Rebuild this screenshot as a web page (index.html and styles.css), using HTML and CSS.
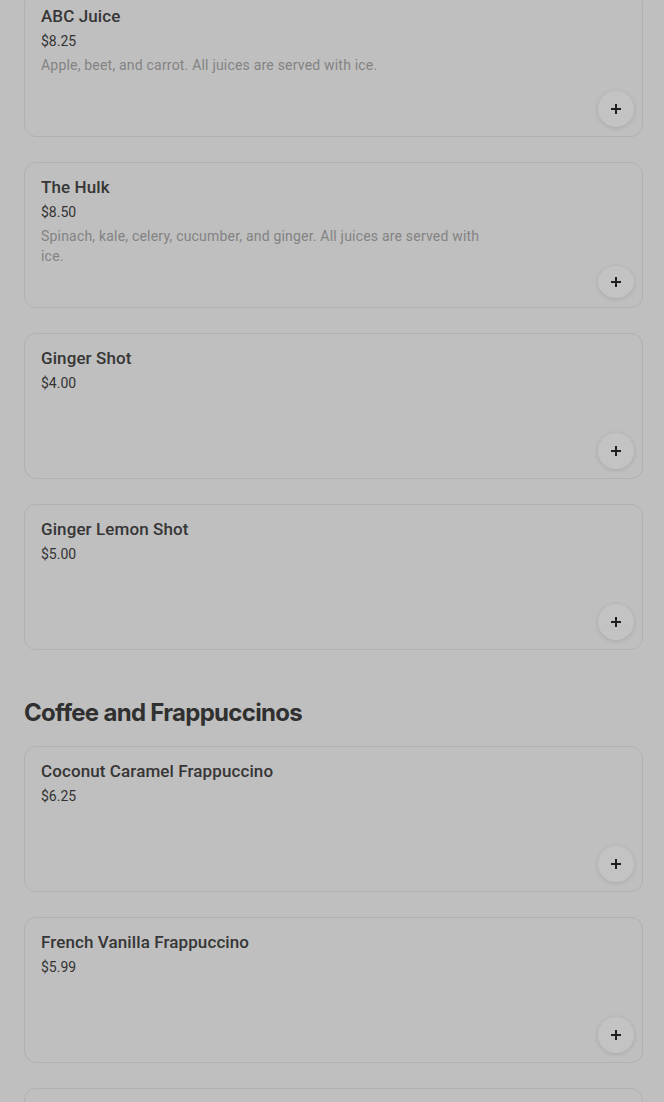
FILE: index.html
```html
<!DOCTYPE html>
<html lang="en">
<head>
    <meta charset="UTF-8">
    <meta name="viewport" content="width=device-width, initial-scale=1.0">
    <title>Menu</title>
    <link rel="stylesheet" href="styles.css">
</head>
<body>
    <div class="menu">
        <section class="group">
            <div class="item">
                <div class="info">
                    <h3 class="name">ABC Juice</h3>
                    <div class="price">$8.25</div>
                    <p class="desc">Apple, beet, and carrot. All juices are served with ice.</p>
                </div>
                <button class="add"><svg viewBox="0 0 12 12" width="12" height="12"><path d="M6 1v10M1 6h10" stroke="#1f1f1f" stroke-width="2"/></svg></button>
            </div>
            <div class="item">
                <div class="info">
                    <h3 class="name">The Hulk</h3>
                    <div class="price">$8.50</div>
                    <p class="desc">Spinach, kale, celery, cucumber, and ginger. All juices are served with ice.</p>
                </div>
                <button class="add"><svg viewBox="0 0 12 12" width="12" height="12"><path d="M6 1v10M1 6h10" stroke="#1f1f1f" stroke-width="2"/></svg></button>
            </div>
            <div class="item">
                <div class="info">
                    <h3 class="name">Ginger Shot</h3>
                    <div class="price">$4.00</div>
                </div>
                <button class="add"><svg viewBox="0 0 12 12" width="12" height="12"><path d="M6 1v10M1 6h10" stroke="#1f1f1f" stroke-width="2"/></svg></button>
            </div>
            <div class="item">
                <div class="info">
                    <h3 class="name">Ginger Lemon Shot</h3>
                    <div class="price">$5.00</div>
                </div>
                <button class="add"><svg viewBox="0 0 12 12" width="12" height="12"><path d="M6 1v10M1 6h10" stroke="#1f1f1f" stroke-width="2"/></svg></button>
            </div>
        </section>

        <section class="group">
            <h2 class="group-title">Coffee and Frappuccinos</h2>
            <div class="item">
                <div class="info">
                    <h3 class="name">Coconut Caramel Frappuccino</h3>
                    <div class="price">$6.25</div>
                </div>
                <button class="add"><svg viewBox="0 0 12 12" width="12" height="12"><path d="M6 1v10M1 6h10" stroke="#1f1f1f" stroke-width="2"/></svg></button>
            </div>
            <div class="item">
                <div class="info">
                    <h3 class="name">French Vanilla Frappuccino</h3>
                    <div class="price">$5.99</div>
                </div>
                <button class="add"><svg viewBox="0 0 12 12" width="12" height="12"><path d="M6 1v10M1 6h10" stroke="#1f1f1f" stroke-width="2"/></svg></button>
            </div>
            <div class="item item-empty"></div>
        </section>
    </div>
</body>
</html>
```

FILE: styles.css
```css
body {
    margin: 0;
    background: #bfbfbf;
    font-family: Roboto, "Liberation Sans", sans-serif;
    color: #2e2e2e;
    overflow: hidden;
}
.menu {
    padding: 0 21px 0 24px;
    margin-top: -9px;
}
.group {
    display: flex;
    flex-direction: column;
    gap: 25px;
}
.group + .group {
    margin-top: 47px;
}
.group-title {
    margin: 0 0 -8px;
    font-family: Inter, "Noto Sans", sans-serif;
    font-size: 24px;
    font-weight: 700;
    letter-spacing: -0.7px;
    line-height: 32px;
    color: #303030;
}
.item {
    display: flex;
    flex-direction: column;
    justify-content: space-between;
    height: 146px;
    box-sizing: border-box;
    padding: 13px 8px 9px 16px;
    border: 1px solid #b1b1b1;
    border-radius: 12px;
}
.name {
    margin: 0;
    font-size: 17px;
    font-weight: 500;
    letter-spacing: 0.1px;
    line-height: 22px;
    color: #363636;
}
.price {
    margin-top: 5px;
    font-size: 14px;
    line-height: 18px;
    color: #333;
}
.desc {
    margin: 5px 0 0;
    max-width: 445px;
    font-size: 14px;
    letter-spacing: 0.2px;
    line-height: 20px;
    color: #838383;
}
.add {
    align-self: flex-end;
    width: 36px;
    height: 36px;
    padding: 0;
    border: none;
    border-radius: 50%;
    background: #c3c3c3;
    box-shadow: 0 1px 5px rgba(0, 0, 0, 0.12);
    display: flex;
    align-items: center;
    justify-content: center;
    cursor: pointer;
}
```
